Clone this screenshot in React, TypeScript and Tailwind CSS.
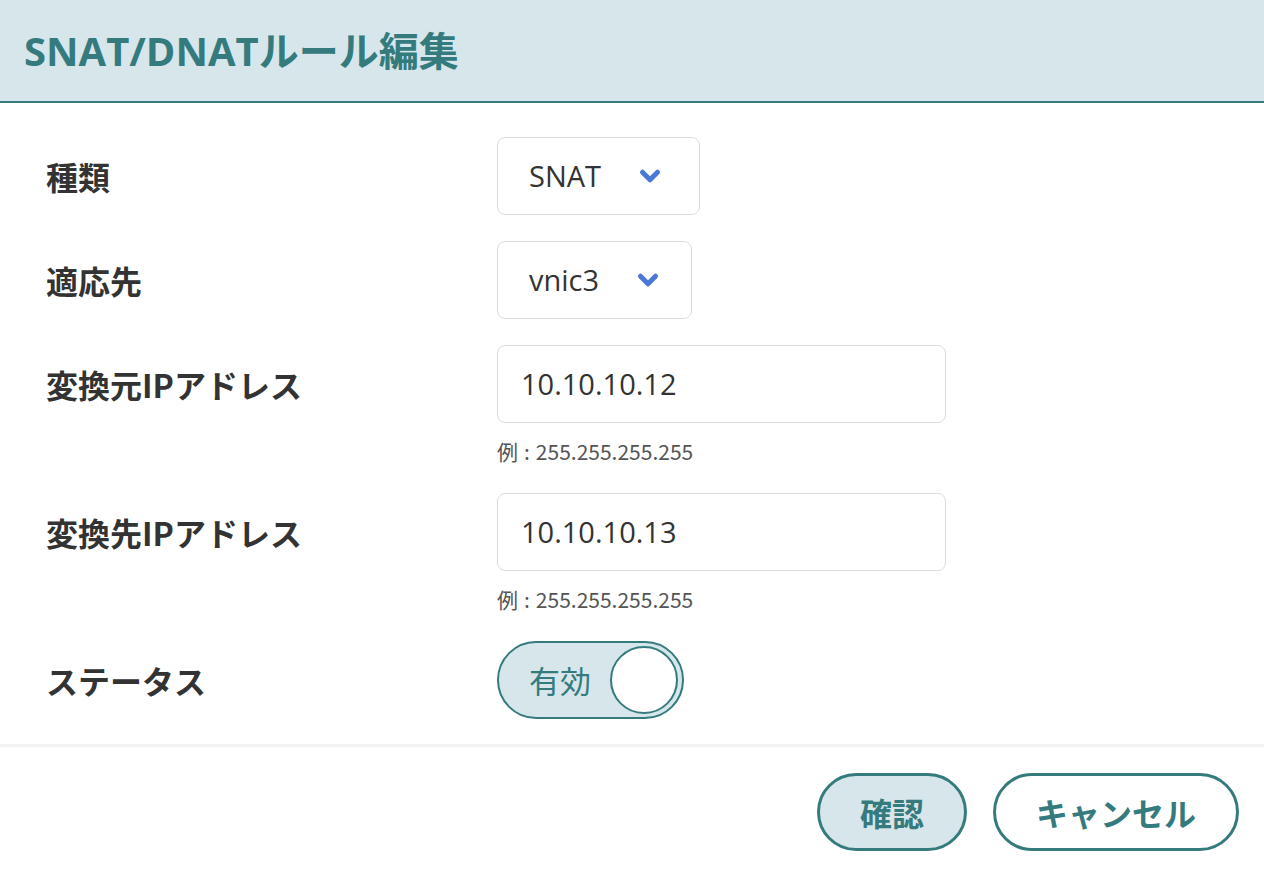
import { ChevronDown } from 'lucide-react';

const jp = { fontFamily: '"Noto Sans CJK JP", "Noto Sans", sans-serif' };
const mixed = { fontFamily: '"Open Sans", "Noto Sans CJK JP", sans-serif' };

function Select({ value, width }: { value: string; width: string }) {
  return (
    <div
      className={`flex h-[78px] ${width} items-center gap-[34px] rounded-[8px] border border-[#dcdcdc] bg-white pl-[31px] text-[29px] text-[#333]`}
      style={mixed}
    >
      <span>{value}</span>
      <ChevronDown className="h-[30px] w-[30px] text-[#4a78d6]" strokeWidth={4} />
    </div>
  );
}

function IpInput({ value }: { value: string }) {
  return (
    <div>
      <div
        className="flex h-[78px] w-[449px] items-center rounded-[8px] border border-[#dcdcdc] bg-white pl-[23px] text-[29px] text-[#333]"
        style={mixed}
      >
        {value}
      </div>
      <p className="mt-[12px] flex gap-[6px] text-[21px] leading-[32px] text-[#555]" style={jp}>
        <span>例</span>
        <span>:</span>
        <span>255.255.255.255</span>
      </p>
    </div>
  );
}

function Row({ label, children }: { label: string; children: React.ReactNode }) {
  return (
    <div className="flex">
      <div className="flex h-[78px] w-[451px] items-center text-[32px] font-bold text-[#333]" style={jp}>
        {label}
      </div>
      {children}
    </div>
  );
}

export default function App() {
  return (
    <div className="h-[882px] w-[1264px] bg-white">
      <header className="flex h-[103px] items-center border-b-2 border-[#357b7e] bg-[#d7e6ea] pl-[24px]">
        <h1 className="text-[40px] font-bold text-[#357b7e]" style={mixed}>
          SNAT/DNATルール編集
        </h1>
      </header>

      <div className="flex flex-col gap-[26px] border-b-[3px] border-[#f2f2f2] pl-[46px] pt-[34px] pb-[25px]">
        <Row label="種類">
          <Select value="SNAT" width="w-[203px]" />
        </Row>
        <Row label="適応先">
          <Select value="vnic3" width="w-[195px]" />
        </Row>
        <Row label="変換元IPアドレス">
          <IpInput value="10.10.10.12" />
        </Row>
        <Row label="変換先IPアドレス">
          <IpInput value="10.10.10.13" />
        </Row>
        <Row label="ステータス">
          <div className="flex h-[78px] w-[187px] items-center justify-between rounded-full border-2 border-[#357b7e] bg-[#d7e6ea] pl-[30px] pr-[4px]">
            <span className="text-[31px] text-[#357b7e]" style={jp}>
              有効
            </span>
            <span className="h-[68px] w-[68px] rounded-full border-2 border-[#357b7e] bg-white" />
          </div>
        </Row>
      </div>

      <div className="flex justify-end gap-[26px] pr-[25px] pt-[26px]">
        <button
          className="flex h-[78px] w-[150px] items-center justify-center rounded-full border-[3px] border-[#357b7e] bg-[#d7e6ea] text-[32px] font-bold text-[#357b7e]"
          style={jp}
        >
          確認
        </button>
        <button
          className="flex h-[78px] w-[246px] items-center justify-center rounded-full border-[3px] border-[#357b7e] bg-white text-[32px] font-bold text-[#357b7e]"
          style={jp}
        >
          キャンセル
        </button>
      </div>
    </div>
  );
}
